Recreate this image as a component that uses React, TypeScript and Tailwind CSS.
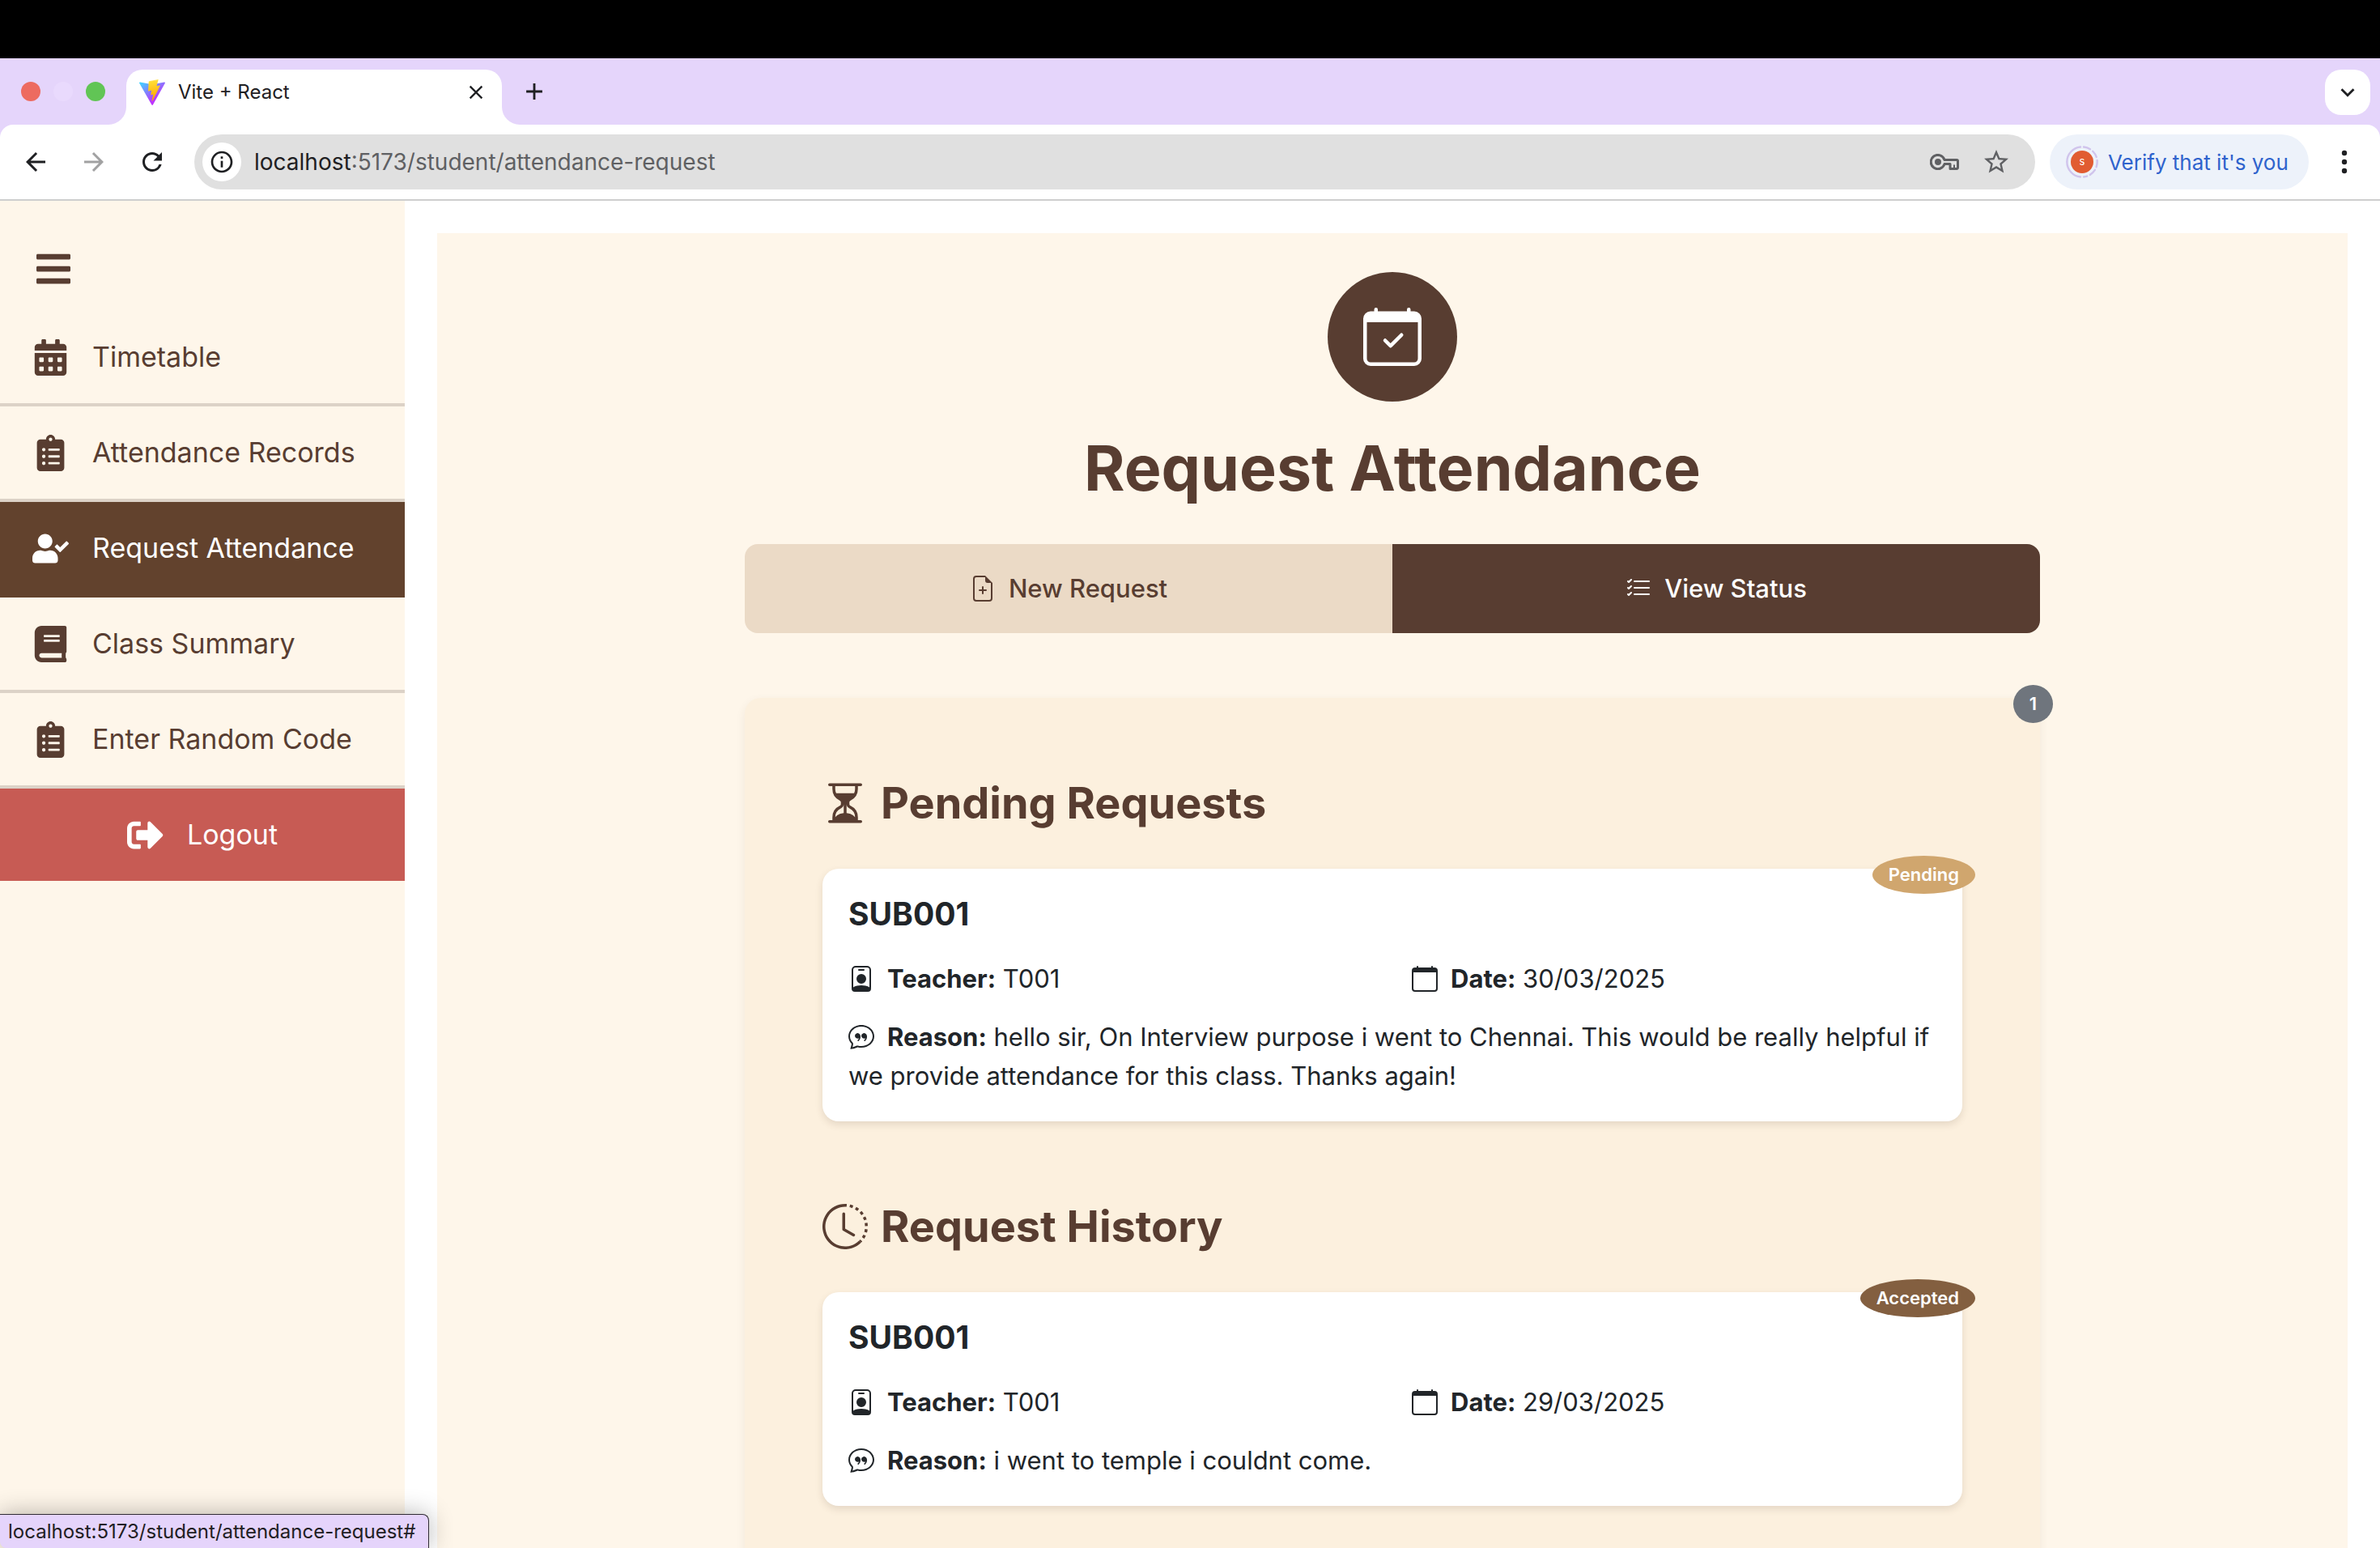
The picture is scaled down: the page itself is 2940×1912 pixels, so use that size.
import type { IconType } from "react-icons";
import {
  FaBars,
  FaBook,
  FaCalendarAlt,
  FaClipboardList,
  FaSignOutAlt,
  FaUserCheck,
} from "react-icons/fa";
import {
  BsCalendar,
  BsCalendarCheck,
  BsChatQuote,
  BsClockHistory,
  BsFileEarmarkPlus,
  BsHourglassSplit,
  BsListCheck,
  BsPersonBadge,
} from "react-icons/bs";
import {
  MdAdd,
  MdArrowBack,
  MdArrowForward,
  MdClose,
  MdInfoOutline,
  MdKeyboardArrowDown,
  MdRefresh,
  MdStarBorder,
} from "react-icons/md";

type AttendanceRequest = {
  subject: string;
  teacher: string;
  date: string;
  reason: string;
  status: "Pending" | "Accepted";
};

const navItems: { label: string; icon: IconType; active?: boolean }[] = [
  { label: "Timetable", icon: FaCalendarAlt },
  { label: "Attendance Records", icon: FaClipboardList },
  { label: "Request Attendance", icon: FaUserCheck, active: true },
  { label: "Class Summary", icon: FaBook },
  { label: "Enter Random Code", icon: FaClipboardList },
];

const pending: AttendanceRequest[] = [
  {
    subject: "SUB001",
    teacher: "T001",
    date: "30/03/2025",
    reason:
      "hello sir, On Interview purpose i went to Chennai. This would be really helpful if we provide attendance for this class. Thanks again!",
    status: "Pending",
  },
];

const history: AttendanceRequest[] = [
  {
    subject: "SUB001",
    teacher: "T001",
    date: "29/03/2025",
    reason: "i went to temple i couldnt come.",
    status: "Accepted",
  },
];

function ViteLogo() {
  return (
    <svg viewBox="0 0 256 257" className="size-8 shrink-0" aria-hidden="true">
      <defs>
        <linearGradient id="vite-shield" x1="-.828%" y1="7.652%" x2="57.636%" y2="78.411%">
          <stop offset="0%" stopColor="#41D1FF" />
          <stop offset="100%" stopColor="#BD34FE" />
        </linearGradient>
        <linearGradient id="vite-bolt" x1="43.376%" y1="2.242%" x2="50.316%" y2="89.03%">
          <stop offset="0%" stopColor="#FFEA83" />
          <stop offset="8.333%" stopColor="#FFDD35" />
          <stop offset="100%" stopColor="#FFA800" />
        </linearGradient>
      </defs>
      <path
        fill="url(#vite-shield)"
        d="M255.153 37.938L134.897 252.976c-2.483 4.44-8.862 4.466-11.382.048L.875 37.958c-2.746-4.814 1.371-10.646 6.827-9.67l120.385 21.517a6.537 6.537 0 0 0 2.322-.004l117.867-21.483c5.438-.991 9.574 4.796 6.877 9.62Z"
      />
      <path
        fill="url(#vite-bolt)"
        d="M185.432.063L96.44 17.501a3.268 3.268 0 0 0-2.634 3.014l-5.474 92.456a3.268 3.268 0 0 0 3.997 3.378l24.777-5.718c2.318-.535 4.413 1.507 3.936 3.838l-7.361 36.047c-.495 2.426 1.782 4.5 4.151 3.78l15.304-4.649c2.372-.72 4.652 1.36 4.15 3.788l-11.698 56.621c-.732 3.542 3.979 5.473 5.943 2.437l1.313-2.028l72.516-144.72c1.215-2.423-.88-5.186-3.54-4.672l-25.505 4.922c-2.396.462-4.435-1.77-3.759-4.114l16.646-57.705c.677-2.35-1.37-4.583-3.769-4.113Z"
      />
    </svg>
  );
}

function KeyIcon() {
  return (
    <svg viewBox="0 0 36 20" className="h-5 w-9" fill="none" aria-hidden="true">
      <path
        d="M18 7.5A8.6 8.6 0 1 0 18 12.6H25V18.4H33A1.5 1.5 0 0 0 34.5 17V9A1.5 1.5 0 0 0 33 7.5Z"
        stroke="#5f6063"
        strokeWidth="3"
        strokeLinejoin="round"
      />
      <path d="M30 13.5V18" stroke="#5f6063" strokeWidth="2" />
      <circle cx="10" cy="10" r="4" fill="#5f6063" />
    </svg>
  );
}

function TabStrip() {
  return (
    <div className="flex h-[82px] items-end bg-[#e5d5fb]">
      <div className="flex gap-4 self-center pr-[26px] pl-[26px]">
        <button aria-label="Close window" className="size-6 rounded-full bg-[#ed6b60]" />
        <button aria-label="Minimise window" className="size-6 rounded-full bg-[#e9dafd]" />
        <button aria-label="Zoom window" className="size-6 rounded-full bg-[#61c555]" />
      </div>
      <div className="relative flex h-[68px] w-[464px] items-start rounded-t-[20px] bg-white pt-3 pr-[18px] pl-4">
        <svg viewBox="0 0 22 22" className="absolute bottom-0 -left-[22px] size-[22px]" aria-hidden="true">
          <path d="M22 0V22H0A22 22 0 0 0 22 0Z" fill="#fff" />
        </svg>
        <svg viewBox="0 0 22 22" className="absolute -right-[22px] bottom-0 size-[22px]" aria-hidden="true">
          <path d="M0 0V22H22A22 22 0 0 1 0 0Z" fill="#fff" />
        </svg>
        <ViteLogo />
        <span className="ml-4 flex-1 text-[24px] leading-8 text-[#1f2023]">Vite + React</span>
        <button aria-label="Close tab" className="self-start pt-0.5">
          <MdClose className="size-7 text-[#1f2023]" />
        </button>
      </div>
      <button aria-label="New tab" className="ml-[23px] self-center">
        <MdAdd className="size-[34px] text-[#1f2023]" />
      </button>
      <button
        aria-label="Search tabs"
        className="mr-3 mb-3 ml-auto flex size-14 items-center justify-center rounded-[20px] bg-white"
      >
        <MdKeyboardArrowDown className="size-[34px] text-[#1f2023]" />
      </button>
    </div>
  );
}

function Toolbar() {
  return (
    <div className="bg-[#e5d5fb]">
      <div className="flex h-[94px] items-center rounded-t-2xl border-b-2 border-[#cecece] bg-white pr-9 pl-[26px]">
        <div className="flex gap-9 text-[#1f2023]">
          <button aria-label="Back">
            <MdArrowBack className="size-9" />
          </button>
          <button aria-label="Forward" className="text-[#a1a1a2]">
            <MdArrowForward className="size-9" />
          </button>
          <button aria-label="Reload">
            <MdRefresh className="size-9" />
          </button>
        </div>
        <div className="ml-[34px] flex h-[68px] flex-1 items-center rounded-full bg-[#e0e0e0] pr-[30px] pl-[10px]">
          <button
            aria-label="Site information"
            className="flex size-12 items-center justify-center rounded-full bg-white text-[#1f2023]"
          >
            <MdInfoOutline className="size-8" />
          </button>
          <label htmlFor="address" className="pl-4 text-[28px] leading-9 text-[#1f2023]">
            localhost
          </label>
          <input
            id="address"
            type="text"
            defaultValue=":5173/student/attendance-request"
            className="min-w-0 flex-1 bg-transparent text-[28px] leading-9 text-[#5f6063] outline-none"
          />
          <button aria-label="Passwords">
            <KeyIcon />
          </button>
          <button aria-label="Bookmark this page" className="ml-7 text-[#5f6063]">
            <MdStarBorder className="size-9" />
          </button>
        </div>
        <button className="ml-[18px] flex h-[68px] w-80 items-center gap-3 rounded-full bg-[#edf2fa] pl-5 text-[26px] whitespace-nowrap text-[#2f63cd]">
          <svg viewBox="0 0 40 40" className="size-10 shrink-0" aria-hidden="true">
            <path d="M18 1.5A18.6 18.6 0 0 0 18 38.5" fill="none" stroke="#d0c4ec" strokeWidth="2.4" strokeLinecap="round" />
            <path
              d="M22 1.5A18.6 18.6 0 0 1 22 38.5"
              fill="none"
              stroke="#d0c4ec"
              strokeWidth="2.4"
              strokeDasharray="8.5 4"
              strokeLinecap="round"
            />
            <circle cx="20" cy="20" r="14" fill="#e15c31" />
            <text x="20" y="24" textAnchor="middle" fontSize="13" fontFamily="Inter, sans-serif" fill="#fff">
              s
            </text>
          </svg>
          <span>Verify that it's you</span>
        </button>
        <button aria-label="Browser menu" className="ml-9">
          <svg viewBox="0 0 16 32" className="h-8 w-4" fill="#1f2023" aria-hidden="true">
            <circle cx="8" cy="5" r="3.2" />
            <circle cx="8" cy="16" r="3.2" />
            <circle cx="8" cy="27" r="3.2" />
          </svg>
        </button>
      </div>
    </div>
  );
}

function Sidebar() {
  return (
    <aside className="w-[500px] shrink-0 bg-[#fef6ea] text-[34px] leading-[50px] text-[#583d31]">
      <button aria-label="Toggle menu" className="block px-[42px] pt-[60px] pb-7">
        <FaBars className="size-12" />
      </button>
      <nav>
        {navItems.map(({ label, icon: Icon, active }) => (
          <a
            key={label}
            href="#"
            className={
              active
                ? "flex items-center gap-[29px] border-b-4 border-[#62422d] bg-[#62422d] px-10 py-8 text-white"
                : "flex items-center gap-[29px] border-b-4 border-[#dcd2c7] px-10 py-8"
            }
          >
            <Icon className="size-[45px] shrink-0" />
            <span className="whitespace-nowrap">{label}</span>
          </a>
        ))}
      </nav>
      <button className="flex w-full items-center justify-center gap-[29px] bg-[#c75b54] py-8 text-white">
        <FaSignOutAlt className="size-[45px]" />
        Logout
      </button>
    </aside>
  );
}

function RequestCard({ request }: { request: AttendanceRequest }) {
  return (
    <article className="relative rounded-[20px] bg-white p-8 text-[31px] leading-[48px] text-[#212529] shadow-[0_4px_10px_rgba(88,61,49,0.14)]">
      <span
        className={
          request.status === "Pending"
            ? "absolute -top-4 -right-4 rounded-[50%] bg-[#d0a66e] px-5 text-[22px] leading-[47px] font-semibold text-white"
            : "absolute -top-4 -right-4 rounded-[50%] bg-[#835f40] px-5 text-[22px] leading-[47px] font-semibold text-white"
        }
      >
        {request.status}
      </span>
      <h3 className="text-[39px] leading-[48px] font-bold">{request.subject}</h3>
      <div className="mt-8 grid grid-cols-2 gap-x-12">
        <p className="flex items-center gap-4">
          <BsPersonBadge className="size-8" />
          <span>
            <strong className="font-bold">Teacher:</strong> {request.teacher}
          </span>
        </p>
        <p className="flex items-center gap-4">
          <BsCalendar className="size-8" />
          <span>
            <strong className="font-bold">Date:</strong> {request.date}
          </span>
        </p>
      </div>
      <p className="mt-6">
        <BsChatQuote className="mr-4 inline size-8 align-[-4px]" />
        <strong className="font-bold">Reason:</strong> {request.reason}
      </p>
    </article>
  );
}

function RequestSection({
  title,
  icon: Icon,
  requests,
}: {
  title: string;
  icon: IconType;
  requests: AttendanceRequest[];
}) {
  return (
    <section>
      <h2 className="mb-12 flex items-center gap-4 text-[54px] leading-[67px] font-bold text-[#583d31]">
        <Icon className="size-14" />
        {title}
      </h2>
      {requests.map((request) => (
        <RequestCard key={request.date} request={request} />
      ))}
    </section>
  );
}

export default function App() {
  return (
    <div className="relative flex h-screen flex-col overflow-hidden bg-white font-['Inter',sans-serif]">
      <div className="h-[72px] shrink-0 bg-black" />
      <header className="shrink-0">
        <TabStrip />
        <Toolbar />
      </header>
      <div className="flex min-h-0 flex-1">
        <Sidebar />
        <main className="min-w-0 flex-1 overflow-hidden px-10 pt-10">
          <div className="bg-[#fef6ea] px-10 pt-12 pb-24">
            <div className="mx-auto max-w-[1600px]">
              <div className="mx-auto flex size-40 items-center justify-center rounded-full bg-[#583d31]">
                <BsCalendarCheck className="size-[72px] text-white" />
              </div>
              <h1 className="mt-[34px] text-center text-[77px] leading-[96px] font-bold text-[#583d31]">
                Request Attendance
              </h1>
              <div className="mt-[46px] grid grid-cols-2 overflow-hidden rounded-2xl text-[31px] leading-[46px] font-medium">
                <button className="flex items-center justify-center gap-4 bg-[#ebdac6] py-8 text-[#583d31]">
                  <BsFileEarmarkPlus className="size-8" />
                  New Request
                </button>
                <button className="flex items-center justify-center gap-4 bg-[#583d31] py-8 text-white">
                  <BsListCheck className="size-8" />
                  View Status
                </button>
              </div>
              <div className="relative mt-20 flex flex-col gap-24 rounded-[20px] bg-[#fcf0de] p-24 shadow-[0_4px_12px_rgba(88,61,49,0.08)]">
                <span className="absolute -top-4 -right-4 rounded-[50%] bg-[#6f757d] px-5 text-[22px] leading-[47px] font-semibold text-white">
                  {pending.length}
                </span>
                <RequestSection title="Pending Requests" icon={BsHourglassSplit} requests={pending} />
                <RequestSection title="Request History" icon={BsClockHistory} requests={history} />
              </div>
            </div>
          </div>
        </main>
      </div>
      <div
        role="status"
        className="absolute bottom-0 left-0 rounded-tr-lg rounded-bl-lg border-t border-r border-[#2f2b33] bg-[#e5d4fb] pr-4 pl-[10px] text-[24px] leading-[41px] text-[#1f2023] shadow-[0_0_30px_rgba(0,0,0,0.3)]"
      >
        localhost:5173/student/attendance-request#
      </div>
    </div>
  );
}
